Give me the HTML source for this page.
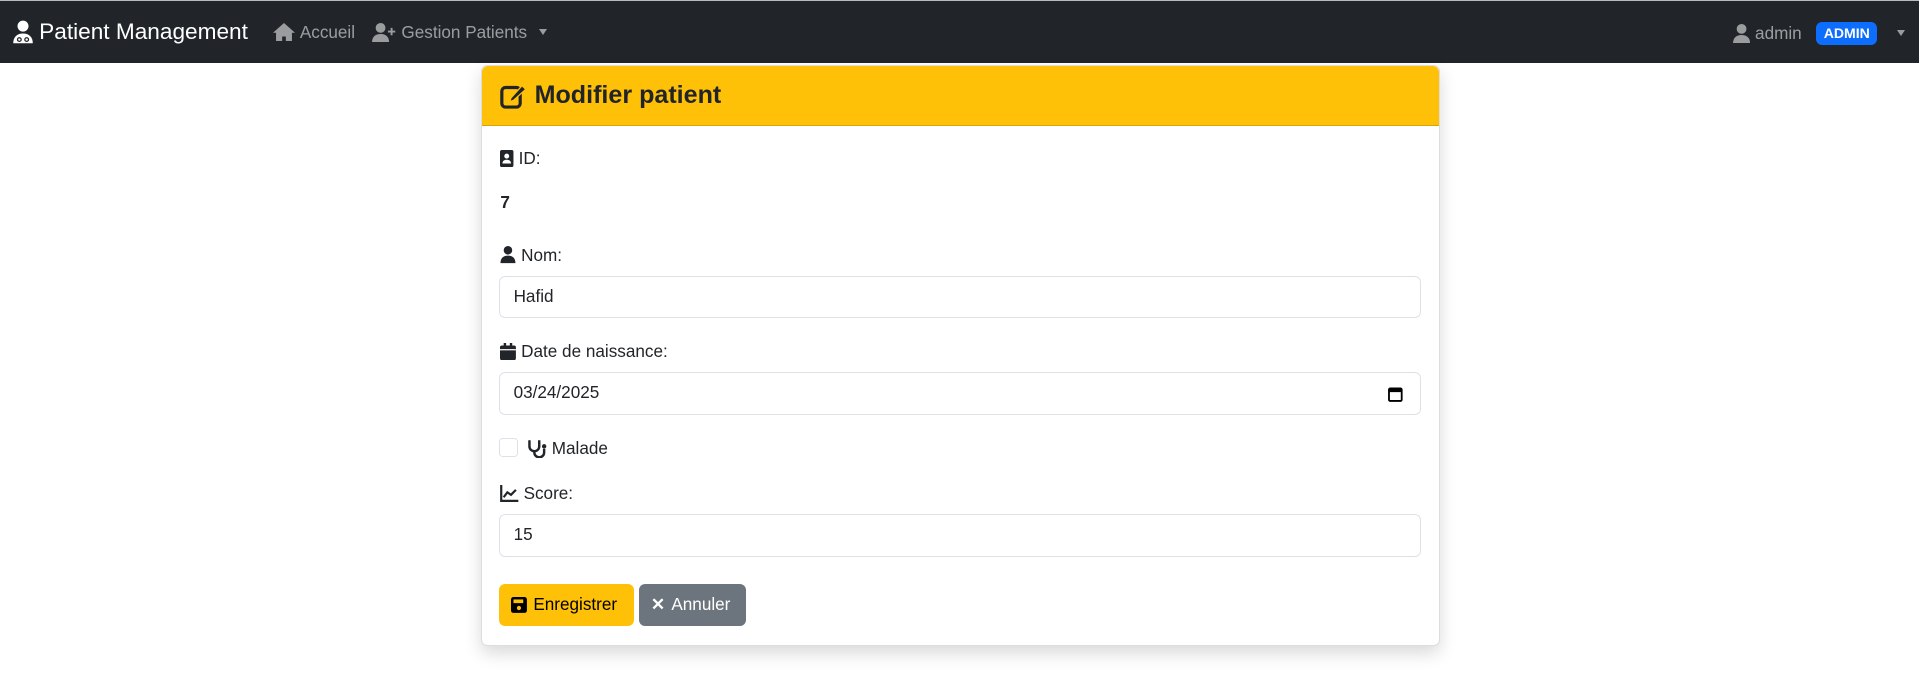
<!DOCTYPE html>
<html><head><meta charset="utf-8"><style>
html,body{margin:0;padding:0;}
body{width:1568px;height:552px;overflow:hidden;zoom:1.2239;font-family:"Liberation Sans",sans-serif;font-size:14px;color:#212529;background:#fff;}
.nav{height:51px;background:#212529;border-top:1px solid #bbb;position:relative;}
.brand{position:absolute;left:10px;top:15px;color:#fff;font-size:18.5px;display:flex;align-items:center;gap:4px;}
.link{position:absolute;top:17px;color:rgba(255,255,255,.55);font-size:14px;display:flex;align-items:center;gap:4px;}
.caret{display:inline-block;border-left:4px solid transparent;border-right:4px solid transparent;border-top:5px solid rgba(255,255,255,.55);margin-left:6px;}
.badge{background:#0d6efd;color:#fff;font-weight:bold;font-size:11.5px;padding:3px 6px;border-radius:5px;margin-left:8px;}
.card{position:absolute;left:393px;top:53px;width:782px;height:473px;border:1px solid #ddd;border-radius:5px;box-shadow:0 6px 14px rgba(0,0,0,.15);background:#fff;}
.hdr{height:48px;background:#ffc107;border-bottom:1px solid #d9a406;border-radius:5px 5px 0 0;display:flex;align-items:center;padding-left:15px;font-size:20.5px;font-weight:bold;gap:6px;}
.lbl{position:absolute;left:15px;display:flex;align-items:center;gap:4px;font-size:14px;}
.inp{position:absolute;left:14px;border:1px solid #dee2e6;border-radius:5px;font-size:14px;line-height:32px;padding-left:11px;box-sizing:border-box;width:753px;height:34px;}
.btn{position:absolute;top:423px;height:35px;border-radius:5px;display:flex;align-items:center;padding:0 10px;gap:5px;font-size:14px;box-sizing:border-box;}
</style></head><body>
<div class="nav">
 <div class="brand"><svg width="18" height="20" viewBox="0 0 18 20"><circle cx="9" cy="5" r="4.5" fill="#fff"/><path d="M1 19c0-5 3-8 8-8s8 3 8 8z" fill="#fff"/><circle cx="6" cy="16" r="1.5" fill="none" stroke="#212529"/><circle cx="12" cy="16" r="1.5" fill="none" stroke="#212529"/></svg>Patient Management</div>
 <div class="link" style="left:223px"><svg width="18" height="15" viewBox="0 0 18 15"><path d="M9 0L0 8h2.5v7h5v-4h3v4h5V8H18z" fill="rgba(255,255,255,.55)"/></svg>Accueil</div>
 <div class="link" style="left:304px"><svg width="20" height="16" viewBox="0 0 20 16"><circle cx="7" cy="4" r="4" fill="rgba(255,255,255,.55)"/><path d="M0 16c0-5 3-7 7-7s7 2 7 7z" fill="rgba(255,255,255,.55)"/><path d="M16 4v6M13 7h6" stroke="rgba(255,255,255,.55)" stroke-width="1.6"/></svg>Gestion Patients<span class="caret"></span></div>
 <div class="link" style="left:1416px;top:17px"><svg width="14" height="16" viewBox="0 0 14 16"><circle cx="7" cy="4" r="4" fill="rgba(255,255,255,.55)"/><path d="M0 16c0-5 3-7 7-7s7 2 7 7z" fill="rgba(255,255,255,.55)"/></svg>admin<span class="badge">ADMIN</span><span class="caret" style="margin-left:12px"></span></div>
</div>
<div class="card">
 <div class="hdr"><svg width="22" height="22" viewBox="0 0 22 22"><rect x="1.5" y="4.5" width="15" height="16" rx="3" fill="none" stroke="#212529" stroke-width="2.6"/><path d="M9 13l9-10 3 3-10 9-3 1z" fill="#212529" stroke="#ffc107" stroke-width="1"/></svg>Modifier patient</div>
 <div class="lbl" style="top:67px"><svg width="11" height="14" viewBox="0 0 11 14"><rect width="11" height="14" rx="1.5" fill="#212529"/><circle cx="5.5" cy="5" r="2" fill="#fff"/><path d="M2 11c0-2 1.5-3 3.5-3s3.5 1 3.5 3z" fill="#fff"/></svg>ID:</div>
 <div class="lbl" style="top:103px;font-weight:bold">7</div>
 <div class="lbl" style="top:146px"><svg width="13" height="14" viewBox="0 0 14 16"><circle cx="7" cy="4" r="4" fill="#212529"/><path d="M0 16c0-5 3-7 7-7s7 2 7 7z" fill="#212529"/></svg>Nom:</div>
 <div class="inp" style="top:172px">Hafid</div>
 <div class="lbl" style="top:225px"><svg width="13" height="14" viewBox="0 0 13 14"><rect y="2" width="13" height="12" rx="1.5" fill="#212529"/><rect x="3" width="2" height="3" fill="#212529"/><rect x="8" width="2" height="3" fill="#212529"/><rect y="5" width="13" height="1" fill="#fff"/></svg>Date de naissance:</div>
 <div class="inp" style="top:250px;height:35px">03/24/2025<svg style="position:absolute;right:14px;top:11px" width="12" height="13" viewBox="0 0 12 13"><rect x="0.8" y="2" width="10.4" height="10.2" rx="1" fill="none" stroke="#000" stroke-width="1.5"/><rect x="1" y="2" width="10" height="3" fill="#000"/></svg></div>
 <div style="position:absolute;left:14px;top:304px;width:14px;height:14px;border:1px solid #dee2e6;border-radius:3px"></div>
 <div class="lbl" style="left:37px;top:304px"><svg width="16" height="16" viewBox="0 0 16 16"><path d="M2 1v5a4 4 0 0 0 8 0V1M6 10v1a4 4 0 0 0 8 0V8" fill="none" stroke="#212529" stroke-width="2"/><circle cx="14" cy="6" r="1.8" fill="#212529"/></svg>Malade</div>
 <div class="lbl" style="top:341px"><svg width="15" height="14" viewBox="0 0 15 14"><path d="M1 0v13h14M3 10l3-4 3 2 4-4" fill="none" stroke="#212529" stroke-width="1.8"/></svg>Score:</div>
 <div class="inp" style="top:366px;height:35px">15</div>
 <div class="btn" style="left:14px;width:110px;background:#ffc107;color:#000"><svg width="13" height="13" viewBox="0 0 13 13"><rect width="13" height="13" rx="2" fill="#000"/><rect x="2" y="2" width="8" height="3" fill="#ffc107"/><circle cx="6.5" cy="9" r="1.7" fill="#ffc107"/></svg>Enregistrer</div>
 <div class="btn" style="left:128px;width:88px;background:#6c757d;color:#fff"><span style="font-weight:bold">✕</span>Annuler</div>
</div>
</body></html>
